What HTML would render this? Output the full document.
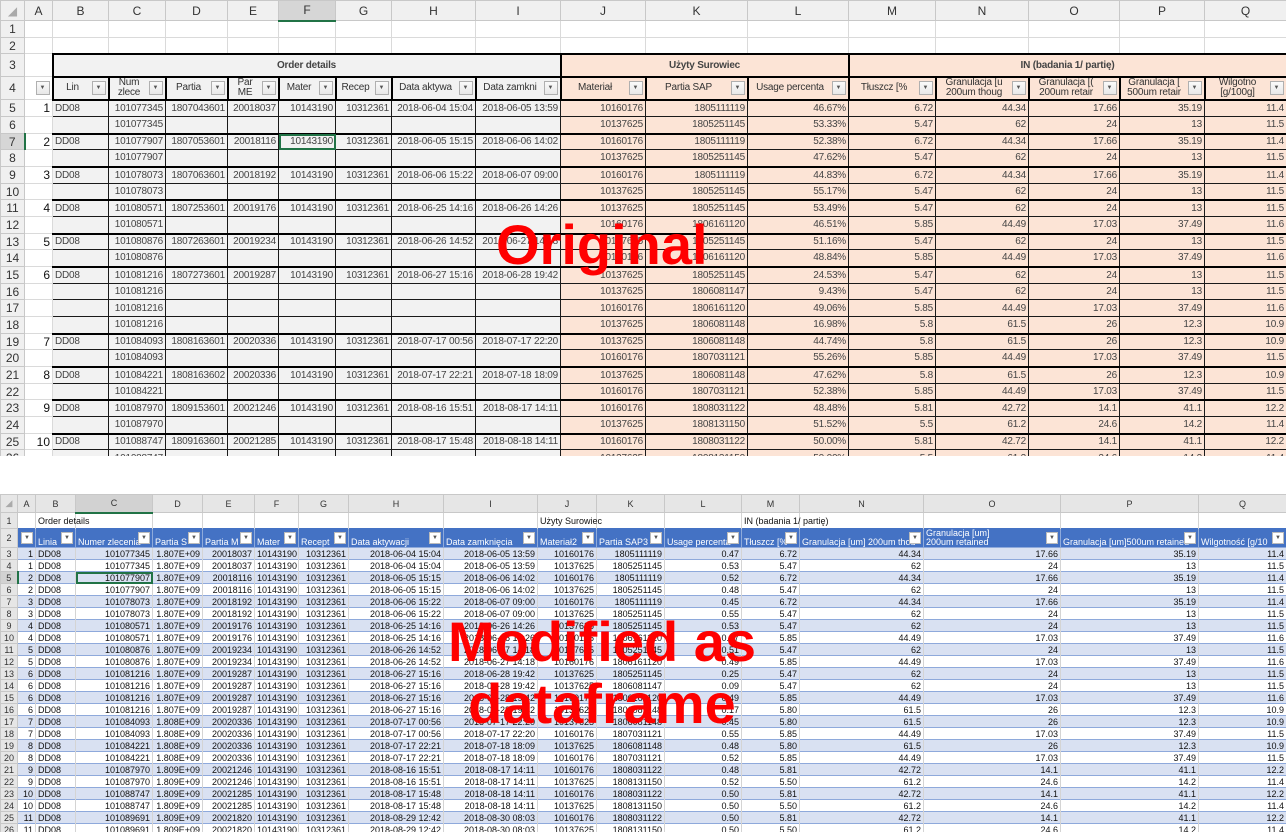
<!DOCTYPE html>
<html><head><meta charset="utf-8"><style>
*{margin:0;padding:0;box-sizing:border-box}
body{width:1286px;height:832px;overflow:hidden;background:#fff;position:relative;font-family:"Liberation Sans",sans-serif}
.wrap{position:absolute;left:0;width:1286px;overflow:hidden}
table{border-collapse:collapse;table-layout:fixed;width:1286px}
td,th{white-space:nowrap;overflow:hidden;position:relative}
.t{font-size:10px;color:#444;letter-spacing:-0.2px}
.t th{background:#f0f0f0;border:1px solid #c8c8c8;font-weight:normal;color:#333;font-size:12px;text-align:center;letter-spacing:0}
.t thead th{height:20px;font-size:12px}
.t td{border:1px solid #1a1a1a;text-align:right;padding:0 2px}
.t td.e{border:1px solid #dadada;background:#fff;text-align:right;color:#111;font-size:12px;letter-spacing:0}
.t td.l{text-align:left}
.t tr.w td{border:1px solid #dadada;background:#fff}
.t tr.g td:not(.e){border-top:2px solid #000}
.t tr.hh td:not(.e){text-align:center;font-weight:bold;color:#444;border:2px solid #000}
.t tr.h4 td:not(.e){text-align:center;line-height:10px;padding-right:18px;border:2px solid #000;color:#333}
.f{position:absolute;right:2px;top:50%;margin-top:-7px;width:14px;height:14px;border:1px solid #b0b0b0;background:linear-gradient(#fafafa,#e8e8e8);font-size:6px;line-height:13px;text-align:center;color:#555;font-weight:normal;letter-spacing:0}
.b{font-size:9px;color:#111}
.b th{background:#e6e6e6;border:1px solid #c8c8c8;font-weight:normal;color:#333;text-align:center}
.b thead th{height:18px}
.b td{border-left:1px solid #d4d4d4;border-right:1px solid #d4d4d4;border-top:1px solid #8ea9db;text-align:right;padding:0 2px;height:12px;line-height:10px}
.b td.l{text-align:left}
.b tr.o td{background:#d9e1f2}
.b tr.w td{border-top:1px solid #d4d4d4;overflow:visible}
.b tr.bh td{background:#4472c4;color:#fff;text-align:left;vertical-align:bottom;border-color:#4472c4;border-right:1px solid #8eaadb;padding-right:16px;line-height:9px;padding-bottom:0;height:18px}
.bf{position:absolute;right:2px;top:3px;width:12px;height:12px;background:#fff;border:1px solid #bbb;color:#555;font-size:6px;line-height:11px;text-align:center}
.sel{outline:2px solid #217346;outline-offset:-2px}
.red{position:absolute;color:#ff0000;font-weight:bold;font-family:"Liberation Sans",sans-serif}
</style></head><body>

<div class="wrap" style="top:0;height:456px">
<table class="t">
<colgroup><col style="width:24px"><col style="width:28px"><col style="width:56px;background:#f2f2f2"><col style="width:57px;background:#f2f2f2"><col style="width:62px;background:#f2f2f2"><col style="width:51px;background:#f2f2f2"><col style="width:57px;background:#f2f2f2"><col style="width:56px;background:#f2f2f2"><col style="width:84px;background:#f2f2f2"><col style="width:85px;background:#f2f2f2"><col style="width:85px;background:#fce4d6"><col style="width:102px;background:#fce4d6"><col style="width:101px;background:#fce4d6"><col style="width:87px;background:#fce4d6"><col style="width:93px;background:#fce4d6"><col style="width:91px;background:#fce4d6"><col style="width:85px;background:#fce4d6"><col style="width:82px;background:#fce4d6"></colgroup>
<thead><tr><th style="color:#aaa">◢</th><th>A</th><th>B</th><th>C</th><th>D</th><th>E</th><th style="background:#d6d6d6;border-bottom:2px solid #217346">F</th><th>G</th><th>H</th><th>I</th><th>J</th><th>K</th><th>L</th><th>M</th><th>N</th><th>O</th><th>P</th><th>Q</th></tr></thead>
<tbody>
<tr class="w" style="height:17px"><th>1</th><td></td><td></td><td></td><td></td><td></td><td></td><td></td><td></td><td></td><td></td><td></td><td></td><td></td><td></td><td></td><td></td><td></td></tr>
<tr class="w" style="height:16px"><th>2</th><td></td><td></td><td></td><td></td><td></td><td></td><td></td><td></td><td></td><td></td><td></td><td></td><td></td><td></td><td></td><td></td><td></td></tr>
<tr class="hh" style="height:23px"><th>3</th><td class="e"></td><td colspan="8">Order details</td><td colspan="3">Użyty Surowiec</td><td colspan="5">IN (badania 1/ partię)</td></tr>
<tr class="h4" style="height:23px"><th>4</th><td class="e"><span class="f">▼</span></td><td>Lin<span class="f">▼</span></td><td>Num<br>zlece<span class="f">▼</span></td><td>Partia<span class="f">▼</span></td><td>Par<br>ME<span class="f">▼</span></td><td>Mater<span class="f">▼</span></td><td>Recep<span class="f">▼</span></td><td>Data aktywa<span class="f">▼</span></td><td>Data zamkni<span class="f">▼</span></td><td>Materiał<span class="f">▼</span></td><td>Partia SAP<span class="f">▼</span></td><td>Usage percenta<span class="f">▼</span></td><td>Tłuszcz [%<span class="f">▼</span></td><td>Granulacja [u<br>200um thoug<span class="f">▼</span></td><td>Granulacja [(<br>200um retair<span class="f">▼</span></td><td>Granulacja [<br>500um retair<span class="f">▼</span></td><td>Wilgotno<br>[g/100g]<span class="f">▼</span></td></tr>
<tr class="g" style="height:17px"><th>5</th><td class="e">1</td><td class="l">DD08</td><td>101077345</td><td>1807043601</td><td>20018037</td><td>10143190</td><td>10312361</td><td>2018-06-04 15:04</td><td>2018-06-05 13:59</td><td>10160176</td><td>1805111119</td><td>46.67%</td><td>6.72</td><td>44.34</td><td>17.66</td><td>35.19</td><td>11.4</td></tr>
<tr style="height:17px"><th>6</th><td class="e"></td><td></td><td>101077345</td><td></td><td></td><td></td><td></td><td></td><td></td><td>10137625</td><td>1805251145</td><td>53.33%</td><td>5.47</td><td>62</td><td>24</td><td>13</td><td>11.5</td></tr>
<tr class="g" style="height:16px"><th style="border-right:2px solid #217346;background:#d6d6d6">7</th><td class="e">2</td><td class="l">DD08</td><td>101077907</td><td>1807053601</td><td>20018116</td><td class="sel">10143190</td><td>10312361</td><td>2018-06-05 15:15</td><td>2018-06-06 14:02</td><td>10160176</td><td>1805111119</td><td>52.38%</td><td>6.72</td><td>44.34</td><td>17.66</td><td>35.19</td><td>11.4</td></tr>
<tr style="height:17px"><th>8</th><td class="e"></td><td></td><td>101077907</td><td></td><td></td><td></td><td></td><td></td><td></td><td>10137625</td><td>1805251145</td><td>47.62%</td><td>5.47</td><td>62</td><td>24</td><td>13</td><td>11.5</td></tr>
<tr class="g" style="height:17px"><th>9</th><td class="e">3</td><td class="l">DD08</td><td>101078073</td><td>1807063601</td><td>20018192</td><td>10143190</td><td>10312361</td><td>2018-06-06 15:22</td><td>2018-06-07 09:00</td><td>10160176</td><td>1805111119</td><td>44.83%</td><td>6.72</td><td>44.34</td><td>17.66</td><td>35.19</td><td>11.4</td></tr>
<tr style="height:16px"><th>10</th><td class="e"></td><td></td><td>101078073</td><td></td><td></td><td></td><td></td><td></td><td></td><td>10137625</td><td>1805251145</td><td>55.17%</td><td>5.47</td><td>62</td><td>24</td><td>13</td><td>11.5</td></tr>
<tr class="g" style="height:17px"><th>11</th><td class="e">4</td><td class="l">DD08</td><td>101080571</td><td>1807253601</td><td>20019176</td><td>10143190</td><td>10312361</td><td>2018-06-25 14:16</td><td>2018-06-26 14:26</td><td>10137625</td><td>1805251145</td><td>53.49%</td><td>5.47</td><td>62</td><td>24</td><td>13</td><td>11.5</td></tr>
<tr style="height:17px"><th>12</th><td class="e"></td><td></td><td>101080571</td><td></td><td></td><td></td><td></td><td></td><td></td><td>10160176</td><td>1806161120</td><td>46.51%</td><td>5.85</td><td>44.49</td><td>17.03</td><td>37.49</td><td>11.6</td></tr>
<tr class="g" style="height:16px"><th>13</th><td class="e">5</td><td class="l">DD08</td><td>101080876</td><td>1807263601</td><td>20019234</td><td>10143190</td><td>10312361</td><td>2018-06-26 14:52</td><td>2018-06-27 14:18</td><td>10137625</td><td>1805251145</td><td>51.16%</td><td>5.47</td><td>62</td><td>24</td><td>13</td><td>11.5</td></tr>
<tr style="height:17px"><th>14</th><td class="e"></td><td></td><td>101080876</td><td></td><td></td><td></td><td></td><td></td><td></td><td>10160176</td><td>1806161120</td><td>48.84%</td><td>5.85</td><td>44.49</td><td>17.03</td><td>37.49</td><td>11.6</td></tr>
<tr class="g" style="height:17px"><th>15</th><td class="e">6</td><td class="l">DD08</td><td>101081216</td><td>1807273601</td><td>20019287</td><td>10143190</td><td>10312361</td><td>2018-06-27 15:16</td><td>2018-06-28 19:42</td><td>10137625</td><td>1805251145</td><td>24.53%</td><td>5.47</td><td>62</td><td>24</td><td>13</td><td>11.5</td></tr>
<tr style="height:16px"><th>16</th><td class="e"></td><td></td><td>101081216</td><td></td><td></td><td></td><td></td><td></td><td></td><td>10137625</td><td>1806081147</td><td>9.43%</td><td>5.47</td><td>62</td><td>24</td><td>13</td><td>11.5</td></tr>
<tr style="height:17px"><th>17</th><td class="e"></td><td></td><td>101081216</td><td></td><td></td><td></td><td></td><td></td><td></td><td>10160176</td><td>1806161120</td><td>49.06%</td><td>5.85</td><td>44.49</td><td>17.03</td><td>37.49</td><td>11.6</td></tr>
<tr style="height:17px"><th>18</th><td class="e"></td><td></td><td>101081216</td><td></td><td></td><td></td><td></td><td></td><td></td><td>10137625</td><td>1806081148</td><td>16.98%</td><td>5.8</td><td>61.5</td><td>26</td><td>12.3</td><td>10.9</td></tr>
<tr class="g" style="height:16px"><th>19</th><td class="e">7</td><td class="l">DD08</td><td>101084093</td><td>1808163601</td><td>20020336</td><td>10143190</td><td>10312361</td><td>2018-07-17 00:56</td><td>2018-07-17 22:20</td><td>10137625</td><td>1806081148</td><td>44.74%</td><td>5.8</td><td>61.5</td><td>26</td><td>12.3</td><td>10.9</td></tr>
<tr style="height:17px"><th>20</th><td class="e"></td><td></td><td>101084093</td><td></td><td></td><td></td><td></td><td></td><td></td><td>10160176</td><td>1807031121</td><td>55.26%</td><td>5.85</td><td>44.49</td><td>17.03</td><td>37.49</td><td>11.5</td></tr>
<tr class="g" style="height:17px"><th>21</th><td class="e">8</td><td class="l">DD08</td><td>101084221</td><td>1808163602</td><td>20020336</td><td>10143190</td><td>10312361</td><td>2018-07-17 22:21</td><td>2018-07-18 18:09</td><td>10137625</td><td>1806081148</td><td>47.62%</td><td>5.8</td><td>61.5</td><td>26</td><td>12.3</td><td>10.9</td></tr>
<tr style="height:16px"><th>22</th><td class="e"></td><td></td><td>101084221</td><td></td><td></td><td></td><td></td><td></td><td></td><td>10160176</td><td>1807031121</td><td>52.38%</td><td>5.85</td><td>44.49</td><td>17.03</td><td>37.49</td><td>11.5</td></tr>
<tr class="g" style="height:17px"><th>23</th><td class="e">9</td><td class="l">DD08</td><td>101087970</td><td>1809153601</td><td>20021246</td><td>10143190</td><td>10312361</td><td>2018-08-16 15:51</td><td>2018-08-17 14:11</td><td>10160176</td><td>1808031122</td><td>48.48%</td><td>5.81</td><td>42.72</td><td>14.1</td><td>41.1</td><td>12.2</td></tr>
<tr style="height:17px"><th>24</th><td class="e"></td><td></td><td>101087970</td><td></td><td></td><td></td><td></td><td></td><td></td><td>10137625</td><td>1808131150</td><td>51.52%</td><td>5.5</td><td>61.2</td><td>24.6</td><td>14.2</td><td>11.4</td></tr>
<tr class="g" style="height:16px"><th>25</th><td class="e">10</td><td class="l">DD08</td><td>101088747</td><td>1809163601</td><td>20021285</td><td>10143190</td><td>10312361</td><td>2018-08-17 15:48</td><td>2018-08-18 14:11</td><td>10160176</td><td>1808031122</td><td>50.00%</td><td>5.81</td><td>42.72</td><td>14.1</td><td>41.1</td><td>12.2</td></tr>
<tr style="height:17px"><th>26</th><td class="e"></td><td></td><td>101088747</td><td></td><td></td><td></td><td></td><td></td><td></td><td>10137625</td><td>1808131150</td><td>50.00%</td><td>5.5</td><td>61.2</td><td>24.6</td><td>14.2</td><td>11.4</td></tr>
</tbody></table>
</div>

<div class="wrap" style="top:494px;height:338px">
<table class="b">
<colgroup><col style="width:17px"><col style="width:18px"><col style="width:40px"><col style="width:77px"><col style="width:50px"><col style="width:52px"><col style="width:44px"><col style="width:50px"><col style="width:95px"><col style="width:94px"><col style="width:59px"><col style="width:68px"><col style="width:77px"><col style="width:58px"><col style="width:124px"><col style="width:137px"><col style="width:138px"><col style="width:88px"></colgroup>
<thead><tr><th style="color:#aaa">◢</th><th>A</th><th>B</th><th style="background:#d2d2d2;border-bottom:2px solid #217346">C</th><th>D</th><th>E</th><th>F</th><th>G</th><th>H</th><th>I</th><th>J</th><th>K</th><th>L</th><th>M</th><th>N</th><th>O</th><th>P</th><th>Q</th></tr></thead>
<tbody>
<tr class="w" style="height:16px"><th>1</th><td></td><td class="l">Order details</td><td></td><td></td><td></td><td></td><td></td><td></td><td></td><td class="l">Użyty Surowiec</td><td></td><td></td><td class="l">IN (badania 1/ partię)</td><td></td><td></td><td></td><td></td></tr>
<tr class="bh" style="height:18px"><th>2</th><td><span class="bf">▼</span></td><td>Linia<span class="bf">▼</span></td><td>Numer zlecenia<span class="bf">▼</span></td><td>Partia S<span class="bf">▼</span></td><td>Partia M<span class="bf">▼</span></td><td>Mater<span class="bf">▼</span></td><td>Recept<span class="bf">▼</span></td><td>Data aktywacji<span class="bf">▼</span></td><td>Data zamknięcia<span class="bf">▼</span></td><td>Materiał2<span class="bf">▼</span></td><td>Partia SAP3<span class="bf">▼</span></td><td>Usage percenta<span class="bf">▼</span></td><td>Tłuszcz [%<span class="bf">▼</span></td><td>Granulacja [um] 200um thou<span class="bf">▼</span></td><td>Granulacja [um]<br>200um retained<span class="bf">▼</span></td><td>Granulacja [um]500um retained<span class="bf">▼</span></td><td>Wilgotność [g/10<span class="bf">▼</span></td></tr>
<tr class="o"><th>3</th><td>1</td><td class="l">DD08</td><td>101077345</td><td>1.807E+09</td><td>20018037</td><td>10143190</td><td>10312361</td><td>2018-06-04 15:04</td><td>2018-06-05 13:59</td><td>10160176</td><td>1805111119</td><td>0.47</td><td>6.72</td><td>44.34</td><td>17.66</td><td>35.19</td><td>11.4</td></tr>
<tr><th>4</th><td>1</td><td class="l">DD08</td><td>101077345</td><td>1.807E+09</td><td>20018037</td><td>10143190</td><td>10312361</td><td>2018-06-04 15:04</td><td>2018-06-05 13:59</td><td>10137625</td><td>1805251145</td><td>0.53</td><td>5.47</td><td>62</td><td>24</td><td>13</td><td>11.5</td></tr>
<tr class="o"><th style="background:#d2d2d2;border-right:2px solid #217346">5</th><td>2</td><td class="l">DD08</td><td class="sel">101077907</td><td>1.807E+09</td><td>20018116</td><td>10143190</td><td>10312361</td><td>2018-06-05 15:15</td><td>2018-06-06 14:02</td><td>10160176</td><td>1805111119</td><td>0.52</td><td>6.72</td><td>44.34</td><td>17.66</td><td>35.19</td><td>11.4</td></tr>
<tr><th>6</th><td>2</td><td class="l">DD08</td><td>101077907</td><td>1.807E+09</td><td>20018116</td><td>10143190</td><td>10312361</td><td>2018-06-05 15:15</td><td>2018-06-06 14:02</td><td>10137625</td><td>1805251145</td><td>0.48</td><td>5.47</td><td>62</td><td>24</td><td>13</td><td>11.5</td></tr>
<tr class="o"><th>7</th><td>3</td><td class="l">DD08</td><td>101078073</td><td>1.807E+09</td><td>20018192</td><td>10143190</td><td>10312361</td><td>2018-06-06 15:22</td><td>2018-06-07 09:00</td><td>10160176</td><td>1805111119</td><td>0.45</td><td>6.72</td><td>44.34</td><td>17.66</td><td>35.19</td><td>11.4</td></tr>
<tr><th>8</th><td>3</td><td class="l">DD08</td><td>101078073</td><td>1.807E+09</td><td>20018192</td><td>10143190</td><td>10312361</td><td>2018-06-06 15:22</td><td>2018-06-07 09:00</td><td>10137625</td><td>1805251145</td><td>0.55</td><td>5.47</td><td>62</td><td>24</td><td>13</td><td>11.5</td></tr>
<tr class="o"><th>9</th><td>4</td><td class="l">DD08</td><td>101080571</td><td>1.807E+09</td><td>20019176</td><td>10143190</td><td>10312361</td><td>2018-06-25 14:16</td><td>2018-06-26 14:26</td><td>10137625</td><td>1805251145</td><td>0.53</td><td>5.47</td><td>62</td><td>24</td><td>13</td><td>11.5</td></tr>
<tr><th>10</th><td>4</td><td class="l">DD08</td><td>101080571</td><td>1.807E+09</td><td>20019176</td><td>10143190</td><td>10312361</td><td>2018-06-25 14:16</td><td>2018-06-26 14:26</td><td>10160176</td><td>1806161120</td><td>0.47</td><td>5.85</td><td>44.49</td><td>17.03</td><td>37.49</td><td>11.6</td></tr>
<tr class="o"><th>11</th><td>5</td><td class="l">DD08</td><td>101080876</td><td>1.807E+09</td><td>20019234</td><td>10143190</td><td>10312361</td><td>2018-06-26 14:52</td><td>2018-06-27 14:18</td><td>10137625</td><td>1805251145</td><td>0.51</td><td>5.47</td><td>62</td><td>24</td><td>13</td><td>11.5</td></tr>
<tr><th>12</th><td>5</td><td class="l">DD08</td><td>101080876</td><td>1.807E+09</td><td>20019234</td><td>10143190</td><td>10312361</td><td>2018-06-26 14:52</td><td>2018-06-27 14:18</td><td>10160176</td><td>1806161120</td><td>0.49</td><td>5.85</td><td>44.49</td><td>17.03</td><td>37.49</td><td>11.6</td></tr>
<tr class="o"><th>13</th><td>6</td><td class="l">DD08</td><td>101081216</td><td>1.807E+09</td><td>20019287</td><td>10143190</td><td>10312361</td><td>2018-06-27 15:16</td><td>2018-06-28 19:42</td><td>10137625</td><td>1805251145</td><td>0.25</td><td>5.47</td><td>62</td><td>24</td><td>13</td><td>11.5</td></tr>
<tr><th>14</th><td>6</td><td class="l">DD08</td><td>101081216</td><td>1.807E+09</td><td>20019287</td><td>10143190</td><td>10312361</td><td>2018-06-27 15:16</td><td>2018-06-28 19:42</td><td>10137625</td><td>1806081147</td><td>0.09</td><td>5.47</td><td>62</td><td>24</td><td>13</td><td>11.5</td></tr>
<tr class="o"><th>15</th><td>6</td><td class="l">DD08</td><td>101081216</td><td>1.807E+09</td><td>20019287</td><td>10143190</td><td>10312361</td><td>2018-06-27 15:16</td><td>2018-06-28 19:42</td><td>10160176</td><td>1806161120</td><td>0.49</td><td>5.85</td><td>44.49</td><td>17.03</td><td>37.49</td><td>11.6</td></tr>
<tr><th>16</th><td>6</td><td class="l">DD08</td><td>101081216</td><td>1.807E+09</td><td>20019287</td><td>10143190</td><td>10312361</td><td>2018-06-27 15:16</td><td>2018-06-28 19:42</td><td>10137625</td><td>1806081148</td><td>0.17</td><td>5.80</td><td>61.5</td><td>26</td><td>12.3</td><td>10.9</td></tr>
<tr class="o"><th>17</th><td>7</td><td class="l">DD08</td><td>101084093</td><td>1.808E+09</td><td>20020336</td><td>10143190</td><td>10312361</td><td>2018-07-17 00:56</td><td>2018-07-17 22:20</td><td>10137625</td><td>1806081148</td><td>0.45</td><td>5.80</td><td>61.5</td><td>26</td><td>12.3</td><td>10.9</td></tr>
<tr><th>18</th><td>7</td><td class="l">DD08</td><td>101084093</td><td>1.808E+09</td><td>20020336</td><td>10143190</td><td>10312361</td><td>2018-07-17 00:56</td><td>2018-07-17 22:20</td><td>10160176</td><td>1807031121</td><td>0.55</td><td>5.85</td><td>44.49</td><td>17.03</td><td>37.49</td><td>11.5</td></tr>
<tr class="o"><th>19</th><td>8</td><td class="l">DD08</td><td>101084221</td><td>1.808E+09</td><td>20020336</td><td>10143190</td><td>10312361</td><td>2018-07-17 22:21</td><td>2018-07-18 18:09</td><td>10137625</td><td>1806081148</td><td>0.48</td><td>5.80</td><td>61.5</td><td>26</td><td>12.3</td><td>10.9</td></tr>
<tr><th>20</th><td>8</td><td class="l">DD08</td><td>101084221</td><td>1.808E+09</td><td>20020336</td><td>10143190</td><td>10312361</td><td>2018-07-17 22:21</td><td>2018-07-18 18:09</td><td>10160176</td><td>1807031121</td><td>0.52</td><td>5.85</td><td>44.49</td><td>17.03</td><td>37.49</td><td>11.5</td></tr>
<tr class="o"><th>21</th><td>9</td><td class="l">DD08</td><td>101087970</td><td>1.809E+09</td><td>20021246</td><td>10143190</td><td>10312361</td><td>2018-08-16 15:51</td><td>2018-08-17 14:11</td><td>10160176</td><td>1808031122</td><td>0.48</td><td>5.81</td><td>42.72</td><td>14.1</td><td>41.1</td><td>12.2</td></tr>
<tr><th>22</th><td>9</td><td class="l">DD08</td><td>101087970</td><td>1.809E+09</td><td>20021246</td><td>10143190</td><td>10312361</td><td>2018-08-16 15:51</td><td>2018-08-17 14:11</td><td>10137625</td><td>1808131150</td><td>0.52</td><td>5.50</td><td>61.2</td><td>24.6</td><td>14.2</td><td>11.4</td></tr>
<tr class="o"><th>23</th><td>10</td><td class="l">DD08</td><td>101088747</td><td>1.809E+09</td><td>20021285</td><td>10143190</td><td>10312361</td><td>2018-08-17 15:48</td><td>2018-08-18 14:11</td><td>10160176</td><td>1808031122</td><td>0.50</td><td>5.81</td><td>42.72</td><td>14.1</td><td>41.1</td><td>12.2</td></tr>
<tr><th>24</th><td>10</td><td class="l">DD08</td><td>101088747</td><td>1.809E+09</td><td>20021285</td><td>10143190</td><td>10312361</td><td>2018-08-17 15:48</td><td>2018-08-18 14:11</td><td>10137625</td><td>1808131150</td><td>0.50</td><td>5.50</td><td>61.2</td><td>24.6</td><td>14.2</td><td>11.4</td></tr>
<tr class="o"><th>25</th><td>11</td><td class="l">DD08</td><td>101089691</td><td>1.809E+09</td><td>20021820</td><td>10143190</td><td>10312361</td><td>2018-08-29 12:42</td><td>2018-08-30 08:03</td><td>10160176</td><td>1808031122</td><td>0.50</td><td>5.81</td><td>42.72</td><td>14.1</td><td>41.1</td><td>12.2</td></tr>
<tr><th>26</th><td>11</td><td class="l">DD08</td><td>101089691</td><td>1.809E+09</td><td>20021820</td><td>10143190</td><td>10312361</td><td>2018-08-29 12:42</td><td>2018-08-30 08:03</td><td>10137625</td><td>1808131150</td><td>0.50</td><td>5.50</td><td>61.2</td><td>24.6</td><td>14.2</td><td>11.4</td></tr>
</tbody></table>
</div>

<div class="red" style="left:496px;top:217px;font-size:56px;line-height:56px">Original</div>
<div class="red" style="left:402px;top:611px;width:400px;text-align:center;font-size:56px;line-height:62px">Modified as<br>dataframe</div>
</body></html>
